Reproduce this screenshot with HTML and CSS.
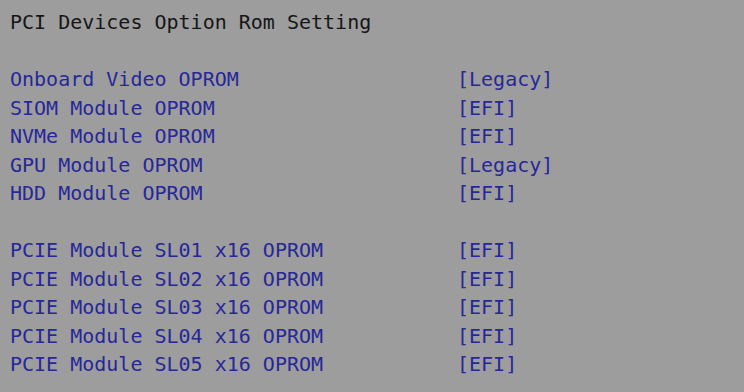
FILE: index.html
```html
<!DOCTYPE html>
<html lang="en">
<head>
<meta charset="UTF-8">
<meta name="viewport" content="width=device-width, initial-scale=1.0">
<title>PCI Devices Option Rom Setting</title>
<link rel="stylesheet" href="styles.css">
</head>
<body>

<div id="setup-screen">
  <div class="title">PCI Devices Option Rom Setting</div>
  <div class="blank"></div>

  <div class="option-list">
    <div class="item">Onboard Video OPROM</div><div class="value">[Legacy]</div>
    <div class="item">SIOM Module OPROM</div><div class="value">[EFI]</div>
    <div class="item">NVMe Module OPROM</div><div class="value">[EFI]</div>
    <div class="item">GPU Module OPROM</div><div class="value">[Legacy]</div>
    <div class="item">HDD Module OPROM</div><div class="value">[EFI]</div>
  </div>

  <div class="blank"></div>

  <div class="option-list">
    <div class="item">PCIE Module SL01 x16 OPROM</div><div class="value">[EFI]</div>
    <div class="item">PCIE Module SL02 x16 OPROM</div><div class="value">[EFI]</div>
    <div class="item">PCIE Module SL03 x16 OPROM</div><div class="value">[EFI]</div>
    <div class="item">PCIE Module SL04 x16 OPROM</div><div class="value">[EFI]</div>
    <div class="item">PCIE Module SL05 x16 OPROM</div><div class="value">[EFI]</div>
  </div>
</div>

</body>
</html>
```

FILE: styles.css
```css
html, body {
  margin: 0;
  padding: 0;
  height: 100%;
  background-color: #9d9d9d;
  overflow: hidden;
}

#setup-screen {
  padding: 8px 0 0 10px;
  font-family: "DejaVu Sans Mono", "Liberation Mono", monospace;
  font-size: 20px;
  line-height: 28.5px;
}

.title {
  color: #161616;
}

.blank {
  height: 28.5px;
}

.option-list {
  display: grid;
  grid-template-columns: 447px 1fr;
  color: #27279a;
}
```
